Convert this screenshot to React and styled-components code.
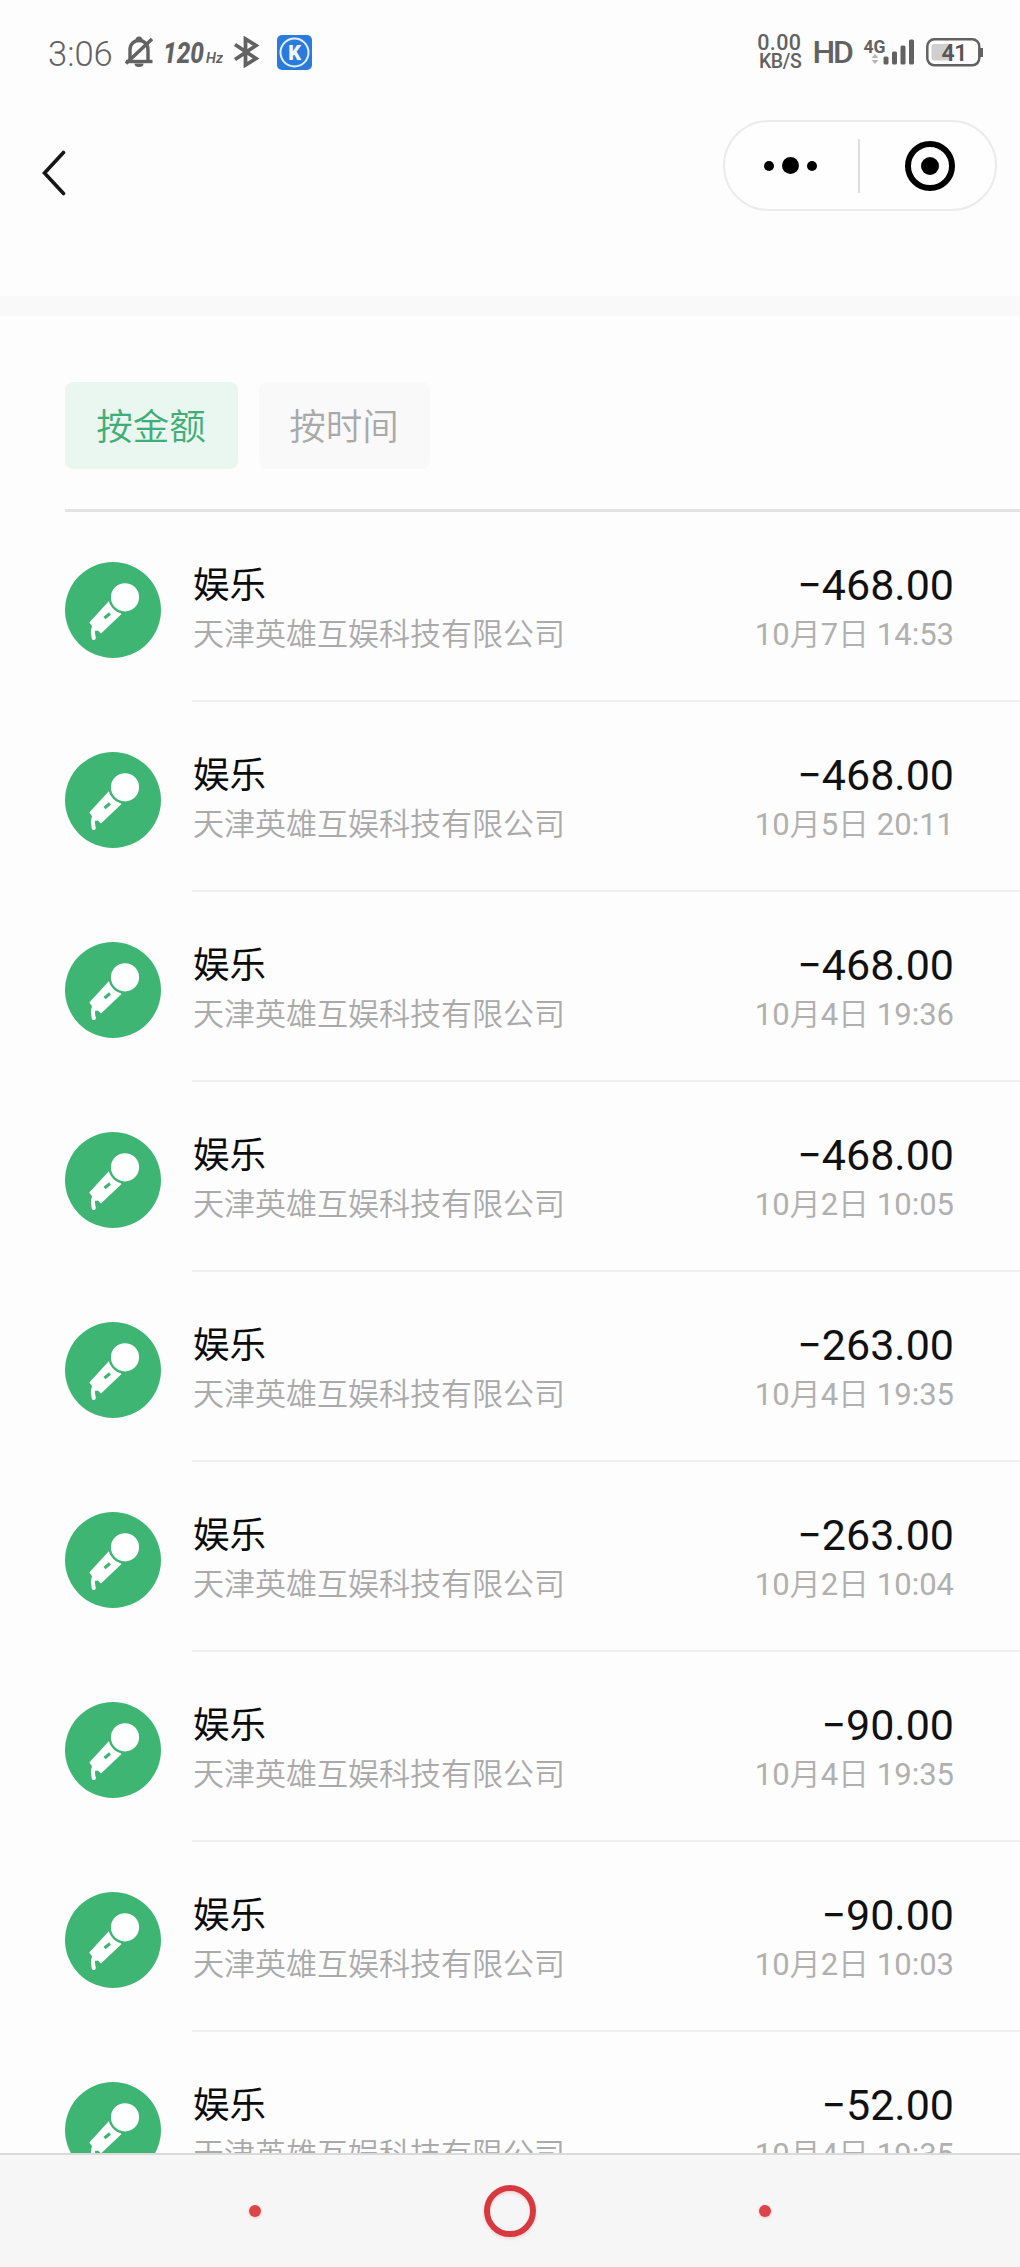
import React from "react";
import styled, { createGlobalStyle } from "styled-components";

const records = [
  { amount: "−468.00", date: "10月7日 14:53" },
  { amount: "−468.00", date: "10月5日 20:11" },
  { amount: "−468.00", date: "10月4日 19:36" },
  { amount: "−468.00", date: "10月2日 10:05" },
  { amount: "−263.00", date: "10月4日 19:35" },
  { amount: "−263.00", date: "10月2日 10:04" },
  { amount: "−90.00", date: "10月4日 19:35" },
  { amount: "−90.00", date: "10月2日 10:03" },
  { amount: "−52.00", date: "10月4日 19:35" },
];

const BellOff = () => (
  <svg width="28" height="32" viewBox="0 0 28 32" fill="none" stroke="#626262">
    <path d="M5 25V14C5 8 9 4.500 14 4.500S23 8 23 14V25" strokeWidth="3.400" />
    <path d="M1 25.500H27.500" strokeWidth="3.400" />
    <path d="M10.500 4a3.500 3.500 0 0 1 7 0z" fill="#626262" stroke="none" />
    <path d="M9.500 27.500h9a4.500 3.500 0 0 1-9 0z" fill="#626262" stroke="none" />
    <path d="M1 27.500L27 3" strokeWidth="3.400" />
  </svg>
);

const RefreshRate = () => (
  <svg width="60" height="36" viewBox="0 0 60 36" fill="#626262" fontFamily="Roboto" fontStyle="italic">
    <text x="0" y="28.500" fontSize="30" fontWeight="800" textLength="41" lengthAdjust="spacingAndGlyphs">
      120
    </text>
    <text x="43" y="28.500" fontSize="15.500" fontWeight="600" textLength="17" lengthAdjust="spacingAndGlyphs">
      Hz
    </text>
  </svg>
);

const Bluetooth = () => (
  <svg width="27" height="32" viewBox="0 0 27 32" fill="none" stroke="#626262">
    <path d="M2 8.500L23 22.500L12.500 29V3L23 9.500L2 23.500" strokeWidth="3.800" />
  </svg>
);

const KBadge = () => (
  <svg width="35" height="35" viewBox="0 0 35 35">
    <rect width="35" height="35" rx="5" fill="#2b7bdc" />
    <circle cx="17.500" cy="17.500" r="14" fill="none" stroke="#e4f1ff" strokeWidth="2" />
    <text x="17.700" y="24.500" textAnchor="middle" fontFamily="Roboto" fontWeight="900" fontSize="20" fill="#f2f8ff">
      K
    </text>
  </svg>
);

const Signal = () => (
  <svg width="52" height="30" viewBox="0 0 52 30" fill="#626262">
    <text x="0.500" y="15.500" fontFamily="Roboto" fontWeight="700" fontSize="18" textLength="22" lengthAdjust="spacingAndGlyphs">
      4G
    </text>
    <path d="M8.500 21l3.500-4 3.500 4zM8.500 23l3.500 4 3.500-4z" fill="#b5b5b5" />
    <rect x="20.500" y="19.500" width="5" height="8" rx="1.500" />
    <rect x="29" y="14.500" width="5" height="13" rx="1.500" />
    <rect x="37.500" y="8.500" width="5" height="19" rx="1.500" />
    <rect x="46" y="2.500" width="5" height="25" rx="1.500" />
  </svg>
);

const Battery = () => (
  <svg width="57" height="30" viewBox="0 0 57 30">
    <rect x="1.300" y="2.300" width="52" height="26" rx="7" fill="none" stroke="#626262" strokeWidth="2.500" />
    <rect x="54" y="11" width="3" height="9" fill="#626262" />
    <rect x="5.500" y="7" width="19" height="16.500" rx="3" fill="#cfcfcf" />
    <text x="15.500" y="23.500" fontFamily="Roboto" fontWeight="600" fontSize="23" textLength="26" fill="#555">
      41
    </text>
  </svg>
);

const BackArrow = () => (
  <svg width="24" height="46" viewBox="0 0 24 46" fill="none">
    <path d="M21.500 2.500L2.500 23L21.500 43.500" stroke="#161616" strokeWidth="3.600" strokeLinecap="round" />
  </svg>
);

const Microphone = () => (
  <svg width="96" height="96" viewBox="0 0 96 96">
    <circle cx="48" cy="48" r="48" fill="#3fb574" />
    <path d="M44 39L56.500 52L36 71.500L33 68.500L30.500 69L24.300 60.500Z" fill="#fff" />
    <path d="M29.800 64C26.500 67.500 28 72 28.800 76" fill="none" stroke="#fff" strokeWidth="4" strokeLinecap="round" />
    <circle cx="60" cy="35.300" r="15.300" fill="#fff" stroke="#3fb574" strokeWidth="2.400" />
    <path d="M39.500 56L45 51.500" stroke="#3fb574" strokeWidth="3" />
  </svg>
);

const App = () => {
  return (
    <>
      <GlobalStyle />
      <Screen>
        <StatusBar>
          <StatusGroup $gap={10}>
            <Clock>3:06</Clock>
            <BellOff />
            <RefreshRate />
            <Bluetooth />
            <AppBadge>
              <KBadge />
            </AppBadge>
          </StatusGroup>
          <StatusGroup $gap={11}>
            <NetSpeed>
              <span>0.00</span>
              <small>KB/S</small>
            </NetSpeed>
            <Hd>HD</Hd>
            <Signal />
            <Battery />
          </StatusGroup>
        </StatusBar>
        <NavBar>
          <BackArrow />
          <Capsule>
            <CapsuleHalf>
              <Dot $size={10} />
              <Dot $size={17} />
              <Dot $size={10} />
            </CapsuleHalf>
            <CapsuleLine />
            <CapsuleHalf $right>
              <Target>
                <Dot $size={18} />
              </Target>
            </CapsuleHalf>
          </Capsule>
        </NavBar>
        <Band />
        <Tabs>
          <Tab $active>按金额</Tab>
          <Tab>按时间</Tab>
        </Tabs>
        <List>
          {records.map((record, i) => (
            <Row key={i}>
              <Microphone />
              <RowBody>
                <Info>
                  <Title>娱乐</Title>
                  <Sub>天津英雄互娱科技有限公司</Sub>
                </Info>
                <Info $end>
                  <Amount>{record.amount}</Amount>
                  <DateText>{record.date}</DateText>
                </Info>
              </RowBody>
            </Row>
          ))}
        </List>
        <BottomNav>
          <NavDot />
          <NavHome />
          <NavDot />
        </BottomNav>
      </Screen>
    </>
  );
};

const GlobalStyle = createGlobalStyle`
  * {
    box-sizing: border-box;
  }
  body {
    margin: 0;
    background: #fdfdfd;
    font-family: Roboto, "Noto Sans CJK SC", sans-serif;
  }
  svg {
    display: block;
    flex: none;
  }
`;

const Screen = styled.div`
  display: flex;
  flex-direction: column;
  width: 1020px;
  height: 2267px;
  overflow: hidden;
  background: #fdfdfd;
`;

const StatusBar = styled.header`
  display: flex;
  justify-content: space-between;
  flex: none;
  height: 104px;
  padding: 0 37px 0 48px;
  color: #626262;
`;

const StatusGroup = styled.div`
  display: flex;
  align-items: center;
  height: 104px;
  gap: ${({ $gap }) => $gap}px;
`;

const Clock = styled.span`
  width: 67px;
  font-size: 34.5px;
  font-weight: 330;
  line-height: 40px;
  margin-top: 4px;
`;

const AppBadge = styled.span`
  margin-left: 7px;
`;

const NetSpeed = styled.span`
  display: flex;
  flex-direction: column;
  align-items: flex-end;
  font-size: 21.5px;
  font-weight: 500;
  line-height: 21px;
  margin-bottom: 2px;
  letter-spacing: 0.4px;
  small {
    font-size: 19.5px;
    line-height: 18px;
    letter-spacing: -0.4px;
  }
`;

const Hd = styled.span`
  font-size: 32px;
  font-weight: 500;
  line-height: 36px;
  letter-spacing: -2px;
`;

const NavBar = styled.nav`
  display: flex;
  align-items: flex-start;
  justify-content: space-between;
  flex: none;
  height: 192px;
  padding: 16px 23px 0 42px;
  > svg {
    margin-top: 30px;
  }
`;

const Capsule = styled.div`
  display: flex;
  align-items: center;
  width: 274px;
  height: 91px;
  border: 2px solid #ebebeb;
  border-radius: 46px;
  background: #fefefe;
`;

const CapsuleHalf = styled.div`
  display: flex;
  flex: 1;
  align-items: center;
  justify-content: center;
  gap: 8px;
  padding: ${({ $right }) => ($right ? "0 0 0 5px" : "0 3px 0 0")};
`;

const CapsuleLine = styled.div`
  width: 2px;
  height: 54px;
  background: #dedede;
`;

const Dot = styled.i`
  width: ${({ $size }) => $size}px;
  height: ${({ $size }) => $size}px;
  border-radius: 50%;
  background: #000;
`;

const Target = styled.div`
  display: flex;
  align-items: center;
  justify-content: center;
  width: 50px;
  height: 50px;
  border: 6.5px solid #000;
  border-radius: 50%;
`;

const Band = styled.div`
  flex: none;
  height: 20px;
  background: #f9f9f9;
`;

const Tabs = styled.div`
  display: flex;
  flex: none;
  gap: 21px;
  height: 196px;
  margin-left: 65px;
  padding-top: 66px;
  border-bottom: 3px solid #e3e3e3;
`;

const Tab = styled.div`
  display: flex;
  align-items: center;
  justify-content: center;
  width: ${({ $active }) => ($active ? 173 : 171)}px;
  height: 87px;
  padding: 0 1px 2px 0;
  border-radius: 8px;
  font-size: 36.5px;
  font-weight: 350;
  color: ${({ $active }) => ($active ? "#3fae76" : "#a9a9a9")};
  background: ${({ $active }) => ($active ? "#e9f7f0" : "#f9f9f9")};
`;

const List = styled.main`
  flex: 1;
  min-height: 0;
  overflow: hidden;
  padding-left: 65px;
`;

const Row = styled.div`
  display: flex;
  gap: 31px;
  height: 190px;
  > svg {
    margin-top: 50px;
  }
`;

const RowBody = styled.div`
  display: flex;
  flex: 1;
  justify-content: space-between;
  padding: 48px 66px 0 1px;
  border-bottom: 2px solid #efefef;
`;

const Info = styled.div`
  display: flex;
  flex-direction: column;
  align-items: ${({ $end }) => ($end ? "flex-end" : "flex-start")};
`;

const Title = styled.div`
  font-size: 36.5px;
  line-height: 52px;
  color: #0c0c0c;
`;

const Amount = styled.div`
  font-size: 43px;
  line-height: 50px;
  margin-bottom: 2px;
  color: #111;
`;

const Sub = styled.div`
  font-size: 31px;
  font-weight: 350;
  line-height: 46px;
  color: #aaa;
  white-space: nowrap;
`;

const DateText = styled(Sub)`
  font-family: Roboto, "Noto Sans CJK SC DemiLight", "Noto Sans CJK SC", sans-serif;
  font-weight: 400;
  color: #b0b0b0;
`;

const BottomNav = styled.footer`
  display: flex;
  align-items: center;
  justify-content: space-between;
  flex: none;
  height: 114px;
  padding: 0 249px;
  border-top: 2px solid #dadada;
  background: #f6f6f6;
`;

const NavDot = styled.i`
  width: 12px;
  height: 12px;
  border-radius: 50%;
  background: #dc444a;
  box-shadow: 0 1px 3px #f3c9c9;
`;

const NavHome = styled.i`
  width: 52px;
  height: 52px;
  border: 6px solid #d63a40;
  border-radius: 50%;
  box-shadow: 0 2px 3px #f6d5d3, inset 0 2px 3px #f6d5d3;
`;

export default App;
